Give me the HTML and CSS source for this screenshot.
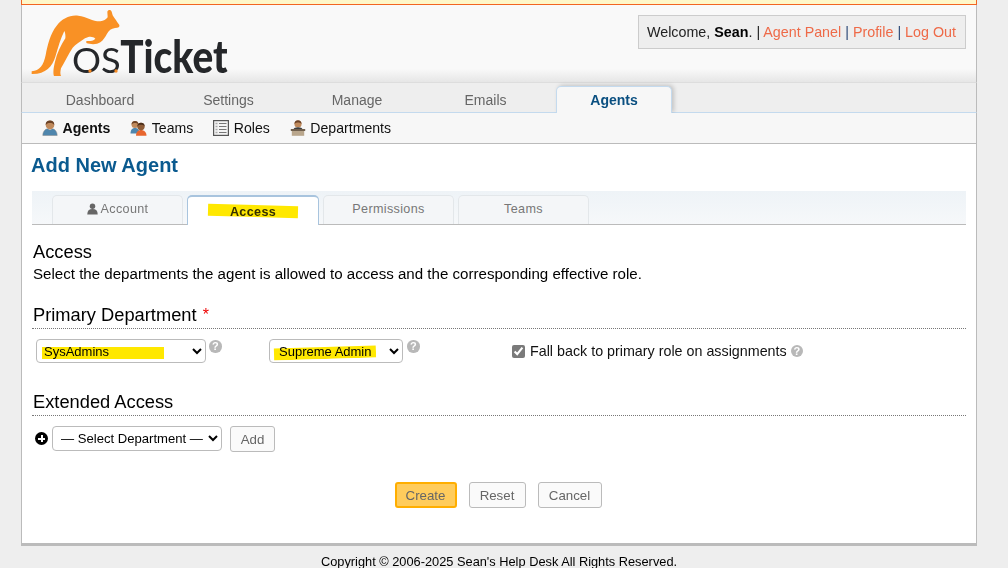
FILE: index.html
```html
<!DOCTYPE html>
<html lang="en">
<head>
<meta charset="utf-8">
<title>Add New Agent</title>
<link rel="stylesheet" href="styles.css">
</head>
<body>
<div class="page">
  <div class="topbar"></div>
  <header class="header">
    <svg class="logo" viewBox="0 0 750 237" width="250" height="79" aria-label="osTicket">
      <path class="roo" d="M20,199 C44,197 56,180 62,150 C68,118 76,86 95,62 C112,40 135,29 160,32 C185,35 205,50 226,49 C236,48 243,43 248,37 L247,20 C249,13 258,13 260,20 L263,31 C268,39 276,50 283,60 C285,66 280,69 270,69 C258,71 252,76 246,86 C241,96 234,106 226,112 C216,119 197,119 184,114 L184,108 C194,109 204,108 211,101 C204,94 192,93 180,100 C165,110 152,118 143,128 C132,145 120,168 108,190 C106,200 105,206 108,213 L87,213 C84,205 85,190 90,170 C96,145 108,120 121,100 C122,92 121,84 118,78 C107,100 100,125 91,155 C82,184 62,208 20,207 Z"/>
      <text class="logo-os" x="141" y="204" textLength="146" lengthAdjust="spacingAndGlyphs">OS</text>
      <circle class="logo-dot" cx="195" cy="198" r="5"/>
      <circle class="logo-dot" cx="273" cy="198" r="5"/>
      <text class="logo-ticket" x="286" y="204" textLength="322" lengthAdjust="spacingAndGlyphs">Ticket</text>
    </svg>
    <div class="userinfo">Welcome, <strong>Sean</strong>. | <a href="#">Agent Panel</a> <span class="sep">|</span> <a href="#">Profile</a> <span class="sep">|</span> <a href="#">Log Out</a></div>
  </header>
  <nav class="nav">
    <a class="nav-item" href="#">Dashboard</a>
    <a class="nav-item" href="#">Settings</a>
    <a class="nav-item" href="#">Manage</a>
    <a class="nav-item" href="#">Emails</a>
    <a class="nav-item nav-active" href="#">Agents</a>
  </nav>
  <nav class="subnav">
    <a class="sub-item sub-active" href="#">
      <svg class="sub-icon" viewBox="0 0 16 16"><path d="M.8 15.500c0-4 2.400-6.500 4.700-6.700L8 10l2.500-1.200c2.300.2 4.700 2.700 4.700 6.700z" fill="#4f86ad" stroke="#8a8a8a" stroke-width=".5"/><circle cx="8" cy="5" r="4.300" fill="#c08a5c"/><path d="M3.700 5C3.700 1.500 5.700.5 8 .5s4.300 1 4.300 4.500C11 3.300 9.300 3 8 3S5 3.300 3.700 5z" fill="#6b4226"/></svg>
      Agents</a>
    <a class="sub-item" href="#">
      <svg class="sub-icon sub-icon-wide" viewBox="0 0 17 16"><path d="M.5 13.500c0-3.800 2-5.500 4.500-5.500s4.500 1.700 4.500 5.500z" fill="#4f86ad"/><circle cx="5" cy="4.500" r="3.500" fill="#c08a5c"/><path d="M1.500 4.500C1.700 2 3.200 1 5 1s3.300 1 3.500 3.500C7.500 3.300 6 3 5 3s-2.500.3-3.500 1.500z" fill="#6b4226"/><path d="M6 15.800c0-3.700 2.200-5.800 5-5.800s5.500 2.100 5.500 5.800z" fill="#e8662e"/><circle cx="11" cy="6.500" r="3.700" fill="#8f5d38"/><path d="M7.300 6.300C7.500 3.800 9.200 2.800 11 2.800s3.500 1 3.700 3.500C13.700 5.100 12.200 4.800 11 4.800s-2.700.3-3.700 1.500z" fill="#4b2e1a"/></svg>
      Teams</a>
    <a class="sub-item" href="#">
      <svg class="sub-icon" viewBox="0 0 16 16"><rect x=".6" y=".6" width="14.800" height="14.800" fill="#f4f4f4" stroke="#555" stroke-width="1.200"/><path d="M2.500 3.500h2M2.500 6.500h2M2.500 9.500h2M2.500 12.500h2" stroke="#aaa" stroke-width="1.500"/><path d="M6 3.500h7.500M6 6.500h7.500M6 9.500h7.500M6 12.500h7.500" stroke="#777"/></svg>
      Roles</a>
    <a class="sub-item" href="#">
      <svg class="sub-icon" viewBox="0 0 16 16"><circle cx="8" cy="4" r="3.600" fill="#c08a5c"/><path d="M4.400 4C4.600 1.200 6.200.3 8 .3s3.400.9 3.600 3.700C10.500 2.700 9 2.400 8 2.400S5.500 2.700 4.400 4z" fill="#6b4226"/><path d="M3.500 9.500c0-1.600 2-2.300 4.500-2.300s4.500.7 4.500 2.300z" fill="#3c3c3c"/><rect x=".8" y="9" width="14.400" height="2" fill="#6f5f4d"/><rect x="1.800" y="11" width="12.400" height="4.800" fill="#b9a68c"/></svg>
      Departments</a>
  </nav>
  <main class="content">
    <h1 class="title">Add New Agent</h1>
    <div class="tabs">
      <a class="tab" href="#"><svg class="tab-icon" viewBox="0 0 12 12"><circle cx="6" cy="3" r="3"/><path d="M.3 12c0-4 1.900-6 5.700-6s5.700 2 5.700 6z"/></svg>Account</a>
      <a class="tab tab-active" href="#"><span class="mark mark-tab"></span>Access</a>
      <a class="tab" href="#">Permissions</a>
      <a class="tab" href="#">Teams</a>
    </div>
    <form class="form">
      <h2 class="section-lead">Access</h2>
      <p class="lead">Select the departments the agent is allowed to access and the corresponding effective role.</p>
      <h2 class="section">Primary Department <span class="req">*</span></h2>
      <div class="primary-row">
        <div class="field field-dept">
          <select class="sel sel-dept"><option>SysAdmins</option></select>
          <span class="mark mark-dept"></span>
          <span class="help help-up">?</span>
        </div>
        <div class="field field-role">
          <select class="sel sel-role"><option>Supreme Admin</option></select>
          <span class="mark mark-role"></span>
          <span class="help help-up">?</span>
        </div>
        <label class="fallback"><input class="check" type="checkbox" checked> Fall back to primary role on assignments <span class="help">?</span></label>
      </div>
      <h2 class="section section-ext">Extended Access</h2>
      <div class="ext-row">
        <span class="plus"></span>
        <select class="sel sel-ext"><option>— Select Department —</option></select>
        <button class="btn btn-add" type="button">Add</button>
      </div>
      <div class="actions">
        <button class="btn btn-primary" type="button">Create</button>
        <button class="btn btn-reset" type="button">Reset</button>
        <button class="btn btn-cancel" type="button">Cancel</button>
      </div>
    </form>
  </main>
  <footer class="footer">Copyright © 2006-2025 Sean's Help Desk All Rights Reserved.</footer>
</div>
</body>
</html>
```
FILE: styles.css
```css
* { box-sizing: border-box; }
html, body { margin: 0; height: 568px; overflow: hidden; }
body { background: #eee; font-family: "Liberation Sans", Arial, sans-serif; font-size: 14px; color: #000; }
a { text-decoration: none; color: inherit; }
.page { width: 956px; margin-left: 21px; }
.topbar { height: 5px; background: #fff7c9; border-bottom: 1px solid #f26522; border-left: 1px solid #f26522; border-right: 1px solid #f26522; }
.header { height: 77px; display: flex; justify-content: space-between; align-items: flex-start; border-left: 1px solid #bbb; border-right: 1px solid #bbb; background: linear-gradient(#f9f9f9 0, #f9f9f9 64px, #e6e6e6 77px); }
.logo { display: block; margin-left: 3px; flex: none; }
.roo { fill: #f99125; }
.logo-os { font-family: Lato, sans-serif; font-weight: 400; font-size: 104px; fill: #25272a; }
.logo-ticket { font-family: Lato, sans-serif; font-weight: 900; font-size: 134px; fill: #25272a; }
.logo-dot { fill: #f58a24; }
.userinfo { margin: 10px 10px 0 0; width: 328px; height: 34px; padding: 0 8px; line-height: 32px; font-size: 14.300px; background: #eee; border: 1px solid #ccc; white-space: nowrap; color: #222; }
.userinfo strong { color: #000; }
.userinfo a { color: #ee6a48; }
.sep { color: #2c4a78; }
.nav { height: 31px; display: flex; gap: 12.500px; padding-left: 20px; background: #eee; border: 1px solid #bbb; border-top: 1px solid #ddd; border-bottom: 1px solid #c4daee; }
.nav-item { width: 116px; height: 30px; line-height: 35px; text-align: center; color: #666; }
.nav-active { height: 27px; margin-top: 3px; line-height: 27px; background: #f7f7f7; border: 1px solid #c4daee; border-bottom: 0; border-radius: 5px 5px 0 0; box-shadow: 2px -1px 4px rgba(0,0,0,.18); color: #0a4f80; font-weight: 700; }
.subnav { position: relative; height: 31px; display: flex; align-items: center; gap: 20px; padding: 0 0 0 20px; font-size: 14.100px; background: #f7f7f7; border-left: 1px solid #bbb; border-right: 1px solid #bbb; border-bottom: 1px solid #bbb; color: #111; }
.sub-item { display: flex; align-items: center; gap: 4.500px; }
.sub-active { font-weight: 700; }
.sub-icon { width: 16px; height: 16px; flex: none; }
.sub-icon-wide { width: 17px; }
.content { height: 399px; padding: 0 10px; background: #fff; border-left: 1px solid #bbb; border-right: 1px solid #bbb; }
.title { margin: 0 0 14px -1px; padding-top: 9px; height: 33px; font-size: 20px; line-height: 24px; font-weight: 700; color: #0a5a8f; }
.tabs { height: 34px; display: flex; gap: 4px; padding: 4px 0 0 20px; background: linear-gradient(#eef3f7, #f6f8fa); border-bottom: 1px solid #bbb; }
.tab { position: relative; width: 131px; height: 29px; display: flex; align-items: center; justify-content: center; gap: 3px; padding-bottom: 3px; font-size: 12.600px; letter-spacing: .35px; color: #777; background: #f4f6f8; border: 1px solid #e3e7ea; border-bottom: 0; border-radius: 5px 5px 0 0; }
.tab-active { width: 132px; height: 30px; padding: 2px 0 0; color: #333; font-weight: 700; background: #fff; border: 1px solid #a8c4de; border-top-width: 2px; border-bottom: 0; }
.tab-icon { width: 11px; height: 12px; fill: #666; }
.mark { position: absolute; background: #ffe800; mix-blend-mode: multiply; pointer-events: none; }
.mark-tab { left: 20px; top: 8px; width: 90px; height: 12px; transform: rotate(1.500deg); }
.form { padding-left: 1px; }
.section-lead { margin: 17px 0 0; font-size: 18.300px; line-height: 20px; font-weight: 400; }
.lead { margin: 3px 0 0; font-size: 15.100px; line-height: 18px; }
.section { margin: 21px 0 0 -1px; padding: 1px 0 3px 1px; height: 25px; font-size: 18.300px; line-height: 20px; font-weight: 400; border-bottom: 1px dotted #777; }
.section-ext { margin-top: 28px; }
.req { color: #e00; font-size: 16px; margin-left: 1px; vertical-align: 1px; }
.primary-row { display: flex; margin-top: 10px; height: 24px; }
.field { position: relative; display: flex; align-items: flex-start; gap: 3px; }
.field-dept { width: 233px; margin-left: 3px; }
.field-role { width: 243px; gap: 4px; }
.sel { height: 24px; font-family: "Liberation Sans", Arial, sans-serif; font-size: 13px; color: #000; background: #fff; border: 1px solid #bbb; border-radius: 4px; padding: 0 0 0 3px; }
.sel-dept { width: 170px; }
.sel-role { width: 134px; padding-left: 5px; }
.sel-ext { width: 170px; height: 25px; padding-left: 4px; font-size: 13.100px; }
.mark-dept { left: 6px; top: 8px; width: 122px; height: 11.500px; }
.mark-role { left: 5px; top: 7.500px; width: 102px; height: 11.500px; transform: rotate(-1.700deg); }
.fallback { display: flex; align-items: center; height: 24px; font-size: 14.300px; color: #111; }
.check { width: 13px; height: 13px; margin: 0 5px 0 0; accent-color: #7a7a7a; }
.help { display: inline-block; width: 12.500px; height: 12.500px; margin-left: 4px; border-radius: 50%; background: #b8b8b8; color: #fff; font-size: 11px; font-weight: 700; line-height: 12.500px; text-align: center; flex: none; }
.help-up { margin: 1px 0 0 0; }
.ext-row { display: flex; align-items: flex-start; margin-top: 10px; height: 26px; padding-left: 2px; }
.plus { width: 13px; height: 13px; margin: 6px 4px 0 0; border-radius: 50%; background: #000; flex: none; background-image: linear-gradient(#fff, #fff), linear-gradient(#fff, #fff); background-size: 7px 2px, 2px 7px; background-position: center; background-repeat: no-repeat; }
.btn { height: 26px; padding: 0; font-family: "Liberation Sans", Arial, sans-serif; font-size: 13.300px; color: #666; background: #fafafa; border: 1px solid #bbb; border-radius: 3px; }
.btn-add { margin-left: 8px; width: 45px; }
.btn-reset { width: 57px; }
.btn-cancel { width: 64px; }
.actions { display: flex; justify-content: center; gap: 12px; margin-top: 30px; padding-right: 3px; }
.btn-primary { width: 62px; background: #ffcc5c; border: 2px solid #ffae00; }
.footer { height: 25px; text-align: center; padding-top: 7px; font-size: 12.800px; line-height: 18px; border-top: 3px solid #bbb; color: #000; }
```
